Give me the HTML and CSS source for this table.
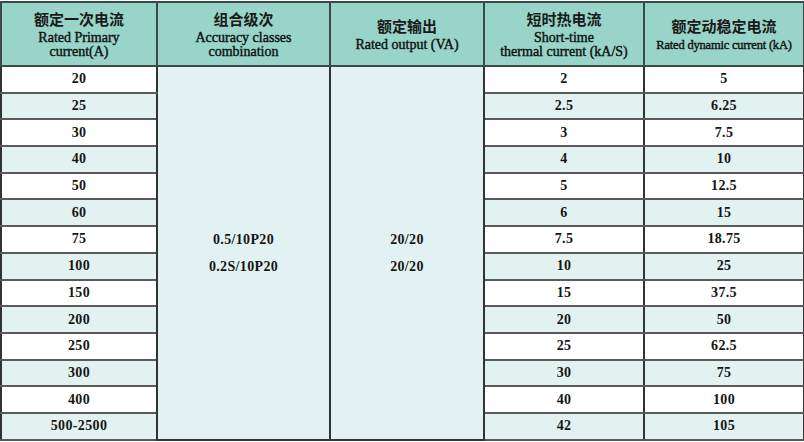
FILE: index.html
```html
<!DOCTYPE html>
<html lang="zh">
<head>
<meta charset="utf-8">
<link rel="stylesheet" href="styles.css">
</head>
<body>
<table class="spec">
  <colgroup>
    <col class="c1"><col class="c2"><col class="c3"><col class="c4"><col class="c5">
  </colgroup>
  <thead>
    <tr class="head">
      <th><div class="zh">额定一次电流</div><div class="en">Rated Primary<br>current(A)</div></th>
      <th><div class="zh">组合级次</div><div class="en">Accuracy classes<br>combination</div></th>
      <th><div class="zh">额定输出</div><div class="en">Rated output (VA)</div></th>
      <th><div class="zh">短时热电流</div><div class="en">Short-time<br>thermal current (kA/S)</div></th>
      <th><div class="zh">额定动稳定电流</div><div class="en small">Rated dynamic current (kA)</div></th>
    </tr>
  </thead>
  <tbody>
    <tr class="w"><td>20</td><td class="merge" rowspan="14"><div class="mv">0.5/10P20</div><div class="mv">0.2S/10P20</div></td><td class="merge" rowspan="14"><div class="mv">20/20</div><div class="mv">20/20</div></td><td>2</td><td>5</td></tr>
    <tr class="l"><td>25</td><td>2.5</td><td>6.25</td></tr>
    <tr class="w"><td>30</td><td>3</td><td>7.5</td></tr>
    <tr class="l"><td>40</td><td>4</td><td>10</td></tr>
    <tr class="w"><td>50</td><td>5</td><td>12.5</td></tr>
    <tr class="l"><td>60</td><td>6</td><td>15</td></tr>
    <tr class="w"><td>75</td><td>7.5</td><td>18.75</td></tr>
    <tr class="l"><td>100</td><td>10</td><td>25</td></tr>
    <tr class="w"><td>150</td><td>15</td><td>37.5</td></tr>
    <tr class="l"><td>200</td><td>20</td><td>50</td></tr>
    <tr class="w"><td>250</td><td>25</td><td>62.5</td></tr>
    <tr class="l"><td>300</td><td>30</td><td>75</td></tr>
    <tr class="w"><td>400</td><td>40</td><td>100</td></tr>
    <tr class="l"><td>500-2500</td><td>42</td><td>105</td></tr>
  </tbody>
</table>
</body>
</html>
```
FILE: styles.css
```css
html, body {
  margin: 0;
  padding: 0;
  background: #ffffff;
}
.spec {
  border-collapse: collapse;
  table-layout: fixed;
  width: 803px;
  margin-top: 1px;
  font-family: "Liberation Serif", "Times New Roman", serif;
  color: #1a1a1a;
  border: 2px solid #353535;
}
.c1 { width: 156px; }
.c2 { width: 173px; }
.c3 { width: 154px; }
.c4 { width: 160px; }
.c5 { width: 160px; }
.head th {
  height: 62px;
  background: #98d5c8;
  border: 2px solid #3b4a47;
  padding: 0;
  vertical-align: middle;
  font-weight: normal;
}
.zh {
  font-family: "Noto Sans CJK SC", sans-serif;
  font-weight: 700;
  font-size: 15px;
  line-height: 20px;
  color: #1a1a1a;
}
.en {
  font-size: 14px;
  line-height: 14px;
  font-weight: 400;
  margin-top: 2px;
  color: #111;
  -webkit-text-stroke: 0.4px #111;
}
.en.small {
  font-size: 12.5px;
  letter-spacing: -0.2px;
}
tbody td {
  height: 24.7px;
  padding: 0;
  text-align: center;
  vertical-align: middle;
  font-weight: 700;
  font-size: 14px;
  letter-spacing: 0.35px;
  color: #151515;
  border-left: 2px solid #333;
  border-right: 2px solid #333;
  border-top: 2px solid #5a5a5a;
  border-bottom: 2px solid #5a5a5a;
}
tr.w td { background: #ffffff; }
tr.l td { background: #e1f2f1; }
tbody td.merge {
  background: #e2f2f2;
  border-bottom: 2px solid #353535;
}
.mv {
  line-height: 27px;
}
```
